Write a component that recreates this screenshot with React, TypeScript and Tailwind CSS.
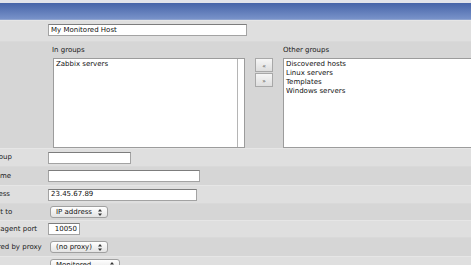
import React from "react";

const lightRow = "bg-[#dfdfdf] border-t border-[#e6e6e6]";
const darkRow = "bg-[#d6d6d6] border-t border-[#d9d9d9]";

function Label({ children }: { children?: React.ReactNode }) {
  return (
    <div className="w-[75px] shrink-0 pl-[2px] flex items-center whitespace-nowrap text-[#1a1a1a]">
      {children}
    </div>
  );
}

function TextBox({ width, value, right }: { width: string; value?: string; right?: boolean }) {
  return (
    <div
      className={`${width} h-[12px] bg-white border border-[#a3a3a3] border-t-[#7d7d7d] flex items-center px-[2px] text-[#111] ${
        right ? "justify-end" : ""
      }`}
    >
      {value}
    </div>
  );
}

function Popup({ width, value }: { width: string; value: string }) {
  return (
    <div
      className={`${width} ml-[2px] h-[12px] rounded-[3px] border border-[#a0a0a0] bg-gradient-to-b from-white to-[#e3e3e3] flex items-center justify-between pl-[5px] pr-[5px] text-[#111]`}
    >
      <span>{value}</span>
      <svg width="4" height="7" viewBox="0 0 4 7">
        <path d="M2 0 L4 2.6 L0 2.6 Z" fill="#333" />
        <path d="M2 7 L4 4.4 L0 4.4 Z" fill="#333" />
      </svg>
    </div>
  );
}

function ListBox({ items, width, track }: { items: string[]; width: string; track?: boolean }) {
  return (
    <div className={`${width} h-[90px] bg-white border border-[#9c9c9c] flex`}>
      <div className="flex-1 pl-[2px] pt-[1px] leading-[9px] text-[#111]">
        {items.map((i) => (
          <div key={i}>{i}</div>
        ))}
      </div>
      {track && <div className="w-[7px] border-l border-[#b5b5b5]" />}
    </div>
  );
}

function MoveButton({ glyph }: { glyph: string }) {
  return (
    <div className="w-[18px] h-[14px] border border-[#a8a8a8] bg-gradient-to-b from-[#f6f6f6] to-[#dedede] flex items-center justify-center text-[6px] text-[#333]">
      {glyph}
    </div>
  );
}

export default function App() {
  return (
    <div className="w-[471px] h-[265px] overflow-hidden bg-[#dfdfdf] font-['DejaVu_Sans',sans-serif] text-[7px]">
      <div className="h-[3px] bg-[#e3e4ea]" />
      <div className="h-[17px] bg-gradient-to-b from-[#4764a8] to-[#7892c9] border-b border-[#8ea3cf]" />

      <div className="ml-[-28px] flex flex-col">
        <div className={`flex h-[21px] ${lightRow}`}>
          <Label>Name</Label>
          <div className="flex-1 pl-[1px] pt-[3px]">
            <TextBox width="w-[199px]" value="My Monitored Host" />
          </div>
        </div>

        <div className={`flex h-[107px] ${darkRow}`}>
          <div className="w-[75px] shrink-0 pl-[2px] pt-[4px] whitespace-nowrap">Groups</div>
          <div className="flex-1 pl-[5px] pt-[4px] flex overflow-hidden">
            <div className="w-[193px] shrink-0">
              <div className="h-[8px] leading-[8px] mb-[4px] text-[#1a1a1a]">In groups</div>
              <ListBox width="ml-[1px] w-[192px]" items={["Zabbix servers"]} track />
            </div>
            <div className="ml-[10px] w-[18px] shrink-0 pt-[12px] flex flex-col gap-[1px]">
              <MoveButton glyph="«" />
              <MoveButton glyph="»" />
            </div>
            <div className="ml-[10px] w-[230px] shrink-0">
              <div className="h-[8px] leading-[8px] mb-[4px] text-[#1a1a1a]">Other groups</div>
              <ListBox
                width="w-[230px]"
                items={["Discovered hosts", "Linux servers", "Templates", "Windows servers"]}
              />
            </div>
          </div>
        </div>

        <div className={`flex h-[18px] ${lightRow}`}>
          <Label>New group</Label>
          <div className="flex-1 pl-[1px] flex items-center">
            <TextBox width="w-[83px]" />
          </div>
        </div>

        <div className={`flex h-[19px] ${darkRow}`}>
          <Label>DNS name</Label>
          <div className="flex-1 pl-[1px] flex items-center">
            <TextBox width="w-[152px]" />
          </div>
        </div>

        <div className={`flex h-[18px] ${lightRow}`}>
          <Label>IP address</Label>
          <div className="flex-1 pl-[1px] flex items-center">
            <TextBox width="w-[149px]" value="23.45.67.89" />
          </div>
        </div>

        <div className={`flex h-[17px] ${darkRow}`}>
          <Label>Connect to</Label>
          <div className="flex-1 pl-[1px] flex items-center">
            <Popup width="w-[58px]" value="IP address" />
          </div>
        </div>

        <div className={`flex h-[17px] ${lightRow}`}>
          <Label>Zabbix agent port</Label>
          <div className="flex-1 pl-[1px] flex items-center">
            <TextBox width="w-[32px]" value="10050" right />
          </div>
        </div>

        <div className={`flex h-[19px] ${darkRow}`}>
          <Label>Monitored by proxy</Label>
          <div className="flex-1 pl-[1px] flex items-center">
            <Popup width="w-[58px]" value="(no proxy)" />
          </div>
        </div>

        <div className={`flex h-[19px] ${lightRow}`}>
          <Label>Status</Label>
          <div className="flex-1 pl-[1px] pt-[2px]">
            <Popup width="w-[70px]" value="Monitored" />
          </div>
        </div>
      </div>
    </div>
  );
}
